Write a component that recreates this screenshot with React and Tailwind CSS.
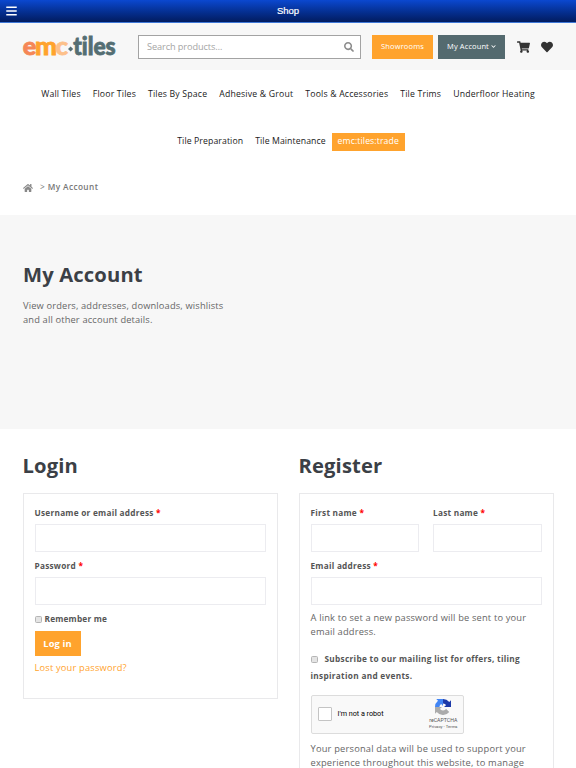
import React from 'react';
import { FaBars, FaSearch, FaShoppingCart, FaHeart, FaHome, FaChevronDown } from 'react-icons/fa';

function Logo() {
  return (
    <svg
      className="h-[40px] w-[96px] shrink-0 overflow-visible [font-variant-ligatures:none]"
      viewBox="0 0 96 40"
      fontFamily="Lato, sans-serif"
      fontWeight="900"
      fontSize="25"
      strokeWidth="0.8"
    >
      <text x="0.7" y="28.3" fill="#f58756" stroke="#f58756" textLength="13.5" lengthAdjust="spacingAndGlyphs">e</text>
      <text x="13" y="28.3" fill="#ffa32d" stroke="#ffa32d" textLength="22" lengthAdjust="spacingAndGlyphs">m</text>
      <text x="33.6" y="28.3" fill="#fdc08a" stroke="#fdc08a" textLength="12.5" lengthAdjust="spacingAndGlyphs">c</text>
      <path d="M48.6 19.4l2.6 2.6-2.6 2.6-2.6-2.6z" fill="#546e73" />
      <text x="51.2" y="28.3" fill="#546e73" stroke="#546e73" textLength="42.5" lengthAdjust="spacingAndGlyphs">tiles</text>
    </svg>
  );
}

function TopBar() {
  return (
    <div className="relative flex h-[23px] items-center justify-center border-b border-[#3f78d8] bg-linear-to-b from-[#0b48d0] to-[#021c60]">
      <FaBars className="absolute left-[6px] top-[5px] h-[12px] w-[11px] text-white" />
      <span className="font-['Liberation_Sans',sans-serif] text-[9.5px] text-white [-webkit-text-stroke:0.2px_white]">Shop</span>
    </div>
  );
}

function Header() {
  return (
    <header className="flex h-[47px] items-center bg-[#f7f7f7] pl-[22px]">
      <Logo />
      <div className="ml-[20px] flex h-6 w-[223px] items-center justify-between border border-[#a3a3a3] bg-white pl-2 pr-[6px]">
        <span className="text-[9.2px] tracking-[-0.1px] text-[#a5a5a5]">Search products…</span>
        <FaSearch className="h-[10px] w-[10px] text-[#8c8c8c]" />
      </div>
      <a href="#" className="ml-[11px] flex h-6 w-[61px] items-center justify-center bg-[#ffa32d] text-[7.5px] tracking-[0.15px] text-white">Showrooms</a>
      <a href="#" className="ml-[5px] flex h-6 w-[67px] items-center justify-center gap-[2px] bg-[#546a6f] text-[7.5px] tracking-[0.1px] text-white">
        My Account
        <FaChevronDown className="h-[5px] w-[5px]" />
      </a>
      <FaShoppingCart className="ml-3 h-[12px] w-[13px] text-[#333]" />
      <FaHeart className="ml-[11px] h-[12px] w-[12px] text-[#333]" />
    </header>
  );
}

function Nav() {
  const link = 'whitespace-nowrap text-[8.7px] text-[#1a1a1a]';
  return (
    <nav className="flex flex-col items-center pt-px">
      <div className="flex h-[47px] items-center gap-3 tracking-[0.19px]">
        <a href="#" className={link}>Wall Tiles</a>
        <a href="#" className={link}>Floor Tiles</a>
        <a href="#" className={link}>Tiles By Space</a>
        <a href="#" className={link}>Adhesive &amp; Grout</a>
        <a href="#" className={link}>Tools &amp; Accessories</a>
        <a href="#" className={link}>Tile Trims</a>
        <a href="#" className={link}>Underfloor Heating</a>
      </div>
      <div className="flex h-[47px] items-center pl-[6px] tracking-[0.1px]">
        <a href="#" className={link}>Tile Preparation</a>
        <a href="#" className={`${link} ml-3`}>Tile Maintenance</a>
        <a href="#" className="ml-[6px] flex h-[18px] w-[73px] items-center justify-center bg-[#ffa32d] text-[8.7px] text-white">emc:tiles:trade</a>
      </div>
    </nav>
  );
}

function Field({ label, className = '' }) {
  return (
    <div className={className}>
      <label className="block h-[18px] text-[8.25px] font-bold leading-[14px] tracking-[0.25px] text-[#555]">
        {label} <span className="text-[#f00]">*</span>
      </label>
      <div className="h-[28px] border border-[#ececf0] bg-white" />
    </div>
  );
}

function Checkbox({ className = '' }) {
  return <span className={`inline-block h-[7px] w-[7px] rounded-[1.5px] border border-[#b5b5b5] bg-[#e4e4e4] ${className}`} />;
}

function Captcha() {
  return (
    <div className="flex h-[39px] w-[153px] items-center rounded-[2px] border border-[#dcdcdc] bg-[#f9f9f9] pl-[6px] pr-[5px]">
      <span className="h-[14px] w-[14px] rounded-[1px] border border-[#c4c4c4] bg-white" />
      <span className="ml-[6px] whitespace-nowrap font-['Roboto',sans-serif] text-[7.2px] text-black">I'm not a robot</span>
      <div className="ml-auto flex flex-col items-center font-['Roboto',sans-serif] text-[#555]">
        <svg className="h-4 w-4" viewBox="0 0 64 64">
          <path d="M64 32V5l-7 7A32 32 0 0 0 32 0v18c6 0 10 3 12 7l-8 7z" fill="#1c3aa9" />
          <path d="M32 0H5l7 7A32 32 0 0 0 0 32h18c0-6 3-10 7-12l7 8z" fill="#4285f4" />
          <path d="M0 32v27l7-7a32 32 0 0 0 50 0L44 39c-2 4-6 7-12 7s-10-3-12-7l8-7z" fill="#ababab" />
        </svg>
        <span className="mt-[2px] text-[5.2px] leading-[6px]">reCAPTCHA</span>
        <span className="mt-[1px] whitespace-nowrap text-[4.2px] leading-[5px]">Privacy - Terms</span>
      </div>
    </div>
  );
}

export default function App() {
  return (
    <div className="h-[768px] w-[576px] overflow-hidden bg-white font-['Open_Sans',sans-serif]">
      <TopBar />
      <Header />
      <Nav />

      <div className="flex h-[50px] items-center pb-[5px] pl-[23px] text-[8.25px] text-[#777]">
        <FaHome className="h-[10px] w-[10px] text-[#888]" />
        <span className="ml-[7px]">&gt;</span>
        <span className="ml-[3px] font-semibold tracking-[0.4px]">My Account</span>
      </div>

      <section className="h-[214px] bg-[#f7f7f7] pl-[23px] pt-[45px]">
        <h1 className="text-[20.2px] font-bold leading-[28px] tracking-[0.15px] text-[#3b4046]">My Account</h1>
        <p className="mt-[11px] text-[9.3px] leading-[14.25px] tracking-[0.15px] text-[#666]">
          View orders, addresses, downloads, wishlists<br />and all other account details.
        </p>
      </section>

      <main className="flex gap-[21px] pl-[22.5px] pt-[22px]">
        <section className="w-[255px]">
          <h2 className="text-[20.2px] font-bold leading-[28px] tracking-[0.15px] text-[#3b4046]">Login</h2>
          <div className="mt-[14px] h-[206px] border border-[#e9e9eb] px-[11px] pt-[12px]">
            <Field label="Username or email address" />
            <Field label="Password" className="mt-[7px]" />
            <div className="mt-[8px] flex h-[12px] items-center">
              <Checkbox />
              <span className="ml-[3px] text-[8.25px] font-bold tracking-[0.2px] text-[#555]">Remember me</span>
            </div>
            <button className="mt-[6px] flex h-[25px] w-[46px] items-center justify-center bg-[#ffa32d] text-[9.3px] font-bold tracking-[0.15px] text-white">Log in</button>
            <a href="#" className="mt-[5px] block text-[9.3px] leading-[14px] tracking-[0.18px] text-[#ffa32d]">Lost your password?</a>
          </div>
        </section>

        <section className="w-[255px]">
          <h2 className="text-[20.2px] font-bold leading-[28px] tracking-[0.15px] text-[#3b4046]">Register</h2>
          <div className="mt-[14px] h-[360px] border border-[#e9e9eb] px-[11px] pt-[12px]">
            <div className="flex gap-[14px]">
              <Field label="First name" className="flex-1" />
              <Field label="Last name" className="flex-1" />
            </div>
            <Field label="Email address" className="mt-[7px]" />
            <p className="mt-[6px] whitespace-nowrap text-[9.3px] leading-[14.25px] tracking-[0.17px] text-[#666]">
              A link to set a new password will be sent to your<br />email address.
            </p>
            <p className="mt-[10px] whitespace-nowrap text-[8.25px] font-bold leading-[17px] tracking-[0.3px] text-[#555]">
              <Checkbox className="mr-[7px] align-[-1px]" />
              Subscribe to our mailing list for offers, tiling<br />inspiration and events.
            </p>
            <div className="mt-[11px]">
              <Captcha />
            </div>
            <p className="mt-2 whitespace-nowrap text-[9.3px] leading-[14.25px] tracking-[0.2px] text-[#666]">
              Your personal data will be used to support your<br />experience throughout this website, to manage
            </p>
          </div>
        </section>
      </main>
    </div>
  );
}
